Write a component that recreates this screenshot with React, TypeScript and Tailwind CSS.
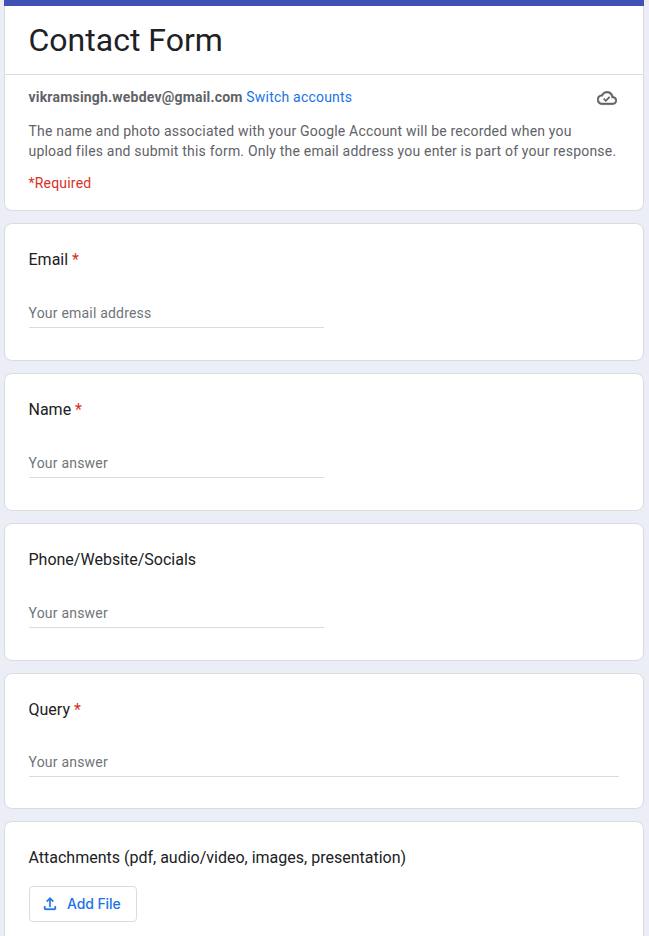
import React from 'react';

function Star() {
  return <span className="text-[#d93025]"> *</span>;
}

type FieldProps = {
  label: string;
  required?: boolean;
  placeholder: string;
  long?: boolean;
};

function Field({ label, required, placeholder, long }: FieldProps) {
  return (
    <section
      className={
        long
          ? 'mt-3 h-[136px] rounded-lg border border-[#dadce0] bg-white px-6 pt-6'
          : 'mt-3 h-[138px] rounded-lg border border-[#dadce0] bg-white px-6 pt-6'
      }
    >
      <h2 className="-indent-[0.5px] text-[16px] leading-6 text-[#202124]">
        {label}
        {required && <Star />}
      </h2>
      <div
        className={
          long
            ? 'mt-[27px] h-[28px] w-full border-b border-[#dadce0] pt-px -indent-[0.5px] text-[14px] leading-6 tracking-[0.2px] text-[#70757a]'
            : 'mt-7 h-[28px] w-1/2 border-b border-[#dadce0] pt-px -indent-[0.5px] text-[14px] leading-6 tracking-[0.2px] text-[#70757a]'
        }
      >
        {placeholder}
      </div>
    </section>
  );
}

export default function App() {
  return (
    <main className="h-[936px] overflow-hidden bg-[#ebeef7] pr-[5px] pl-1 font-[Roboto,sans-serif]">
      <header className="h-[211px] rounded-b-lg border border-t-0 border-[#dadce0] bg-white">
        <div className="-mx-px h-[6px] bg-[#3f51b5]" />
        <div className="h-[69px] border-b border-[#dadce0] pl-[23.5px]">
          <h1 className="pt-[13px] text-[32px] leading-[43px] text-[#202124]">Contact Form</h1>
        </div>
        <div className="pr-6 pl-[23.5px] text-[14px] leading-5 tracking-[0.2px] text-[#5f6368]">
          <div className="flex justify-between pt-3">
            <p>
              <b>vikramsingh.webdev@gmail.com</b> <a className="text-[#1a73e8]">Switch accounts</a>
            </p>
            <svg className="mt-[1px] mr-[2px] size-5" viewBox="0 0 24 24" fill="currentColor" stroke="currentColor" strokeWidth="0.5">
              <path d="M19.35 10.04A7.49 7.49 0 0 0 12 4C9.11 4 6.6 5.64 5.35 8.04A5.994 5.994 0 0 0 0 14c0 3.31 2.69 6 6 6h13c2.76 0 5-2.24 5-5 0-2.64-2.05-4.78-4.65-4.96zM19 18H6c-2.21 0-4-1.79-4-4 0-2.05 1.53-3.76 3.56-3.97l1.07-.11.5-.95A5.469 5.469 0 0 1 12 6c2.62 0 4.88 1.86 5.39 4.43l.3 1.5 1.53.11A2.98 2.98 0 0 1 22 15c0 1.65-1.35 3-3 3z" />
              <path d="M8 12.8l2.6 2.5 4.6-4.6" fill="none" strokeWidth="2" />
            </svg>
          </div>
          <p className="mt-[13px]">
            The name and photo associated with your Google Account will be recorded when you
            <br />
            upload files and submit this form. Only the email address you enter is part of your response.
          </p>
          <p className="mt-3 text-[#d93025]">*Required</p>
        </div>
      </header>
      <Field label="Email" required placeholder="Your email address" />
      <Field label="Name" required placeholder="Your answer" />
      <Field label="Phone/Website/Socials" placeholder="Your answer" />
      <Field label="Query" required placeholder="Your answer" long />
      <section className="mt-3 h-[180px] rounded-t-lg border border-[#dadce0] bg-white px-6 pt-6">
        <h2 className="-indent-[0.5px] text-[16px] leading-6 text-[#202124]">
          Attachments (pdf, audio/video, images, presentation)
        </h2>
        <button className="mt-4 flex h-9 w-[108px] items-center rounded border border-[#dadce0] pl-[11px] font-[Inter,sans-serif] text-[14px] font-medium tracking-[-0.1px] text-[#1a73e8]">
          <svg className="mr-[8px] size-[18px]" viewBox="0 0 24 24" fill="currentColor" stroke="currentColor" strokeWidth="0.4">
            <path d="M4 15h2v3h12v-3h2v3c0 1.1-.9 2-2 2H6c-1.1 0-2-.9-2-2v-3zm4.41-5.59L11 6.83V16h2V6.83l2.59 2.58L17 8l-5-5-5 5 1.41 1.41z" />
          </svg>
          <span className="pb-[2px]">Add File</span>
        </button>
      </section>
    </main>
  );
}
